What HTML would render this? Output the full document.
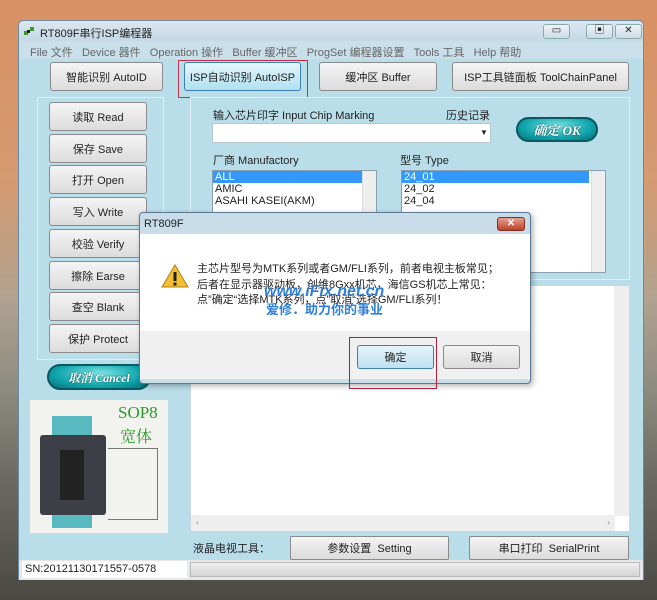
<!DOCTYPE html>
<html><head><meta charset="utf-8"><style>
*{box-sizing:border-box;margin:0;padding:0}
body{width:657px;height:600px;position:relative;overflow:hidden;font-family:"Liberation Sans","Noto Sans CJK SC",sans-serif;font-size:11px;color:#222;
background:linear-gradient(180deg,#d89164 0%,#d49a70 30%,#b0a290 50%,#8c8b80 65%,#6b6a62 80%,#4a4843 100%)}
.a{position:absolute}
.btn{position:absolute;background:linear-gradient(#f4f4f4,#dcdcdc);border:1px solid #8a8a8a;border-radius:3px;text-align:center;font-size:11px;color:#222;display:flex;align-items:center;justify-content:center;white-space:nowrap}
.teal{position:absolute;border-radius:14px;background:radial-gradient(ellipse at 50% 35%,#7ee6e6,#10a5ad 60%,#066d75);border:2px solid #0b5960;color:#fff;font-style:italic;font-weight:bold;font-family:"Liberation Serif","Noto Serif CJK SC",serif;display:flex;align-items:center;justify-content:center;text-shadow:0 0 2px #044}
.list{position:absolute;background:#fff;border:1px solid #8aa0b0;font-size:11px;line-height:12px}
.sel{background:#3399ff;color:#fff;padding-left:2px}
.it{padding-left:2px}
</style></head><body>
<!-- window -->
<div class="a" style="left:18px;top:20px;width:626px;height:560px;background:#b9dde9;border:1px solid #6d8aa0;border-radius:5px 5px 0 0"></div>
<div class="a" style="left:19px;top:21px;width:624px;height:20px;background:linear-gradient(#dbe7f0,#c5d8e6);border-radius:5px 5px 0 0"></div>
<div class="a" style="left:24px;top:25px;width:12px;height:12px">
<svg width="12" height="12"><rect x="0" y="6" width="4" height="4" fill="#3a9a2a"/><rect x="6" y="2" width="4" height="4" fill="#3a9a2a"/><rect x="3" y="5" width="3" height="3" fill="#222"/></svg></div>
<div class="a" style="left:40px;top:25px;font-size:11px;color:#222">RT809F串行ISP编程器</div>
<div class="a" style="left:543px;top:24px;width:27px;height:15px;border:1px solid #8aa;border-radius:3px;background:linear-gradient(#eef3f7,#ccdbe6);text-align:center;line-height:12px;font-size:10px">▭</div>
<div class="a" style="left:586px;top:24px;width:27px;height:15px;border:1px solid #8aa;border-radius:3px;background:linear-gradient(#eef3f7,#ccdbe6);text-align:center;line-height:12px;font-size:10px">▣</div>
<div class="a" style="left:615px;top:24px;width:27px;height:15px;border:1px solid #8aa;border-radius:3px;background:linear-gradient(#eef3f7,#ccdbe6);text-align:center;line-height:12px;font-size:10px">✕</div>
<!-- menu -->
<div class="a" style="left:19px;top:41px;width:624px;height:18px;background:#c9dfe9"></div>
<div class="a" style="left:30px;top:44px;font-size:11px;color:#666;word-spacing:0;white-space:nowrap">File 文件 &nbsp; Device 器件 &nbsp; Operation 操作 &nbsp; Buffer 缓冲区 &nbsp; ProgSet 编程器设置 &nbsp; Tools 工具 &nbsp; Help 帮助</div>
<!-- toolbar -->
<div class="btn" style="left:50px;top:62px;width:113px;height:29px">智能识别 AutoID</div>
<div class="a" style="left:178px;top:60px;width:130px;height:38px;border:1px solid #c0304a"></div>
<div class="btn" style="left:184px;top:62px;width:117px;height:29px;background:linear-gradient(#e4f6fc,#b0e0f0);border-color:#3c7fb1">ISP自动识别 AutoISP</div>
<div class="btn" style="left:319px;top:62px;width:118px;height:29px">缓冲区 Buffer</div>
<div class="btn" style="left:452px;top:62px;width:177px;height:29px">ISP工具链面板 ToolChainPanel</div>
<!-- left group -->
<div class="a" style="left:37px;top:97px;width:127px;height:263px;border:1px solid #dfeff5"></div>
<div class="btn" style="left:49px;top:102px;width:98px;height:29px">读取 Read</div>
<div class="btn" style="left:49px;top:134px;width:98px;height:29px">保存 Save</div>
<div class="btn" style="left:49px;top:165px;width:98px;height:29px">打开 Open</div>
<div class="btn" style="left:49px;top:197px;width:98px;height:29px">写入 Write</div>
<div class="btn" style="left:49px;top:229px;width:98px;height:29px">校验 Verify</div>
<div class="btn" style="left:49px;top:261px;width:98px;height:29px">擦除 Earse</div>
<div class="btn" style="left:49px;top:292px;width:98px;height:29px">查空 Blank</div>
<div class="btn" style="left:49px;top:324px;width:98px;height:29px">保护 Protect</div>
<div class="teal" style="left:47px;top:364px;width:104px;height:26px;font-size:12px">取消 Cancel</div>
<!-- image -->
<div class="a" style="left:30px;top:400px;width:138px;height:133px;background:#f2f2ee">
 <div class="a" style="left:88px;top:3px;font-family:'Liberation Serif',serif;font-size:17px;color:#2a9a2a">SOP8</div>
 <div class="a" style="left:90px;top:24px;font-family:'Noto Serif CJK SC',serif;font-size:16px;color:#2a9a2a">宽体</div>
 <div class="a" style="left:22px;top:16px;width:40px;height:112px;background:#58b9c0"></div>
 <div class="a" style="left:10px;top:35px;width:66px;height:80px;background:#3d3f46;border-radius:3px"></div>
 <div class="a" style="left:30px;top:50px;width:24px;height:50px;background:#222"></div>
 <div class="a" style="left:78px;top:48px;width:50px;height:72px;border:1px solid #777;border-left:none"></div>
</div>
<!-- right group -->
<div class="a" style="left:190px;top:97px;width:440px;height:183px;border:1px solid #dfeff5"></div>
<div class="a" style="left:213px;top:107px;font-size:11px">输入芯片印字 Input Chip Marking</div>
<div class="a" style="left:446px;top:107px;font-size:11px">历史记录</div>
<div class="a" style="left:212px;top:123px;width:279px;height:20px;background:#fff;border:1px solid #b8c8d0"></div>
<div class="a" style="left:480px;top:128px;font-size:8px">▼</div>
<div class="teal" style="left:516px;top:117px;width:82px;height:25px;font-size:13px">确定 OK</div>
<div class="a" style="left:213px;top:152px;font-size:11px">厂商 Manufactory</div>
<div class="a" style="left:400px;top:152px;font-size:11px">型号 Type</div>
<div class="list" style="left:212px;top:170px;width:165px;height:50px"><div class="sel">ALL</div><div class="it">AMIC</div><div class="it">ASAHI KASEI(AKM)</div>
<div class="a" style="right:0;top:0;width:14px;height:48px;background:#eee;border-left:1px solid #ddd"></div></div>
<div class="list" style="left:401px;top:170px;width:205px;height:103px"><div class="sel" style="margin-right:16px">24_01</div><div class="it">24_02</div><div class="it">24_04</div>
<div class="a" style="right:0;top:0;width:14px;height:101px;background:#eee;border-left:1px solid #ddd"></div></div>
<!-- output -->
<div class="a" style="left:190px;top:285px;width:440px;height:247px;background:#fff;border:1px solid #c8d8e0"></div>
<div class="a" style="left:614px;top:286px;width:15px;height:230px;background:#eee"></div>
<div class="a" style="left:191px;top:515px;width:424px;height:16px;background:#eee;font-size:8px;color:#888;padding:3px 5px">‹<span style="float:right">›</span></div>
<!-- bottom -->
<div class="a" style="left:193px;top:540px;font-size:11px">液晶电视工具：</div>
<div class="btn" style="left:290px;top:536px;width:159px;height:24px;border-radius:2px">参数设置 &nbsp;Setting</div>
<div class="btn" style="left:469px;top:536px;width:160px;height:24px;border-radius:2px">串口打印 &nbsp;SerialPrint</div>
<div class="a" style="left:19px;top:560px;width:624px;height:20px;background:#e4e8ea"></div>
<div class="a" style="left:22px;top:561px;width:165px;height:17px;background:#fff;font-size:11px;padding:2px 3px;overflow:hidden;white-space:nowrap">SN:20121130171557-0578</div>
<div class="a" style="left:190px;top:562px;width:450px;height:15px;background:linear-gradient(#eee,#d4d4d4);border:1px solid #bbb"></div>
<!-- dialog -->
<div class="a" style="left:139px;top:212px;width:392px;height:172px;background:#c9dcea;border:1px solid #5d7890;border-radius:4px;box-shadow:2px 2px 6px rgba(0,0,0,.3)"></div>
<div class="a" style="left:144px;top:218px;font-size:11px;color:#222">RT809F</div>
<div class="a" style="left:497px;top:217px;width:28px;height:14px;background:linear-gradient(#e8a090,#c0402a);border:1px solid #803020;border-radius:3px;color:#fff;font-size:10px;text-align:center;line-height:12px;font-weight:bold">✕</div>
<div class="a" style="left:140px;top:234px;width:390px;height:97px;background:#fff"></div>
<div class="a" style="left:140px;top:331px;width:390px;height:48px;background:#f0f0f0"></div>
<svg class="a" style="left:161px;top:263px" width="28" height="26"><path d="M14 2 L27 24 L1 24 Z" fill="#f4c030" stroke="#b08020"/><rect x="12.5" y="9" width="3" height="9" fill="#222"/><rect x="12.5" y="19.5" width="3" height="3" fill="#222"/></svg>
<div class="a" style="left:197px;top:262px;font-size:11px;line-height:15.5px;white-space:nowrap">主芯片型号为MTK系列或者GM/FLI系列，前者电视主板常见；<br>后者在显示器驱动板，创维8Gxx机芯，海信GS机芯上常见：<br>点”确定“选择MTK系列，点”取消“选择GM/FLI系列！</div>
<div class="a" style="left:264px;top:283px;font-size:16px;font-weight:bold;font-style:italic;color:#2f7fd6;white-space:nowrap">www.iFix.net.cn</div>
<div class="a" style="left:266px;top:299px;font-size:13px;font-weight:bold;color:#2f7fd6;white-space:nowrap">爱修．助力你的事业</div>
<div class="a" style="left:349px;top:337px;width:88px;height:52px;border:1px solid #b0203a"></div>
<div class="btn" style="left:357px;top:345px;width:77px;height:24px;background:linear-gradient(#e6f4fb,#bfe0f0);border-color:#3c7fb1">确定</div>
<div class="btn" style="left:443px;top:345px;width:77px;height:24px">取消</div>
</body></html>
